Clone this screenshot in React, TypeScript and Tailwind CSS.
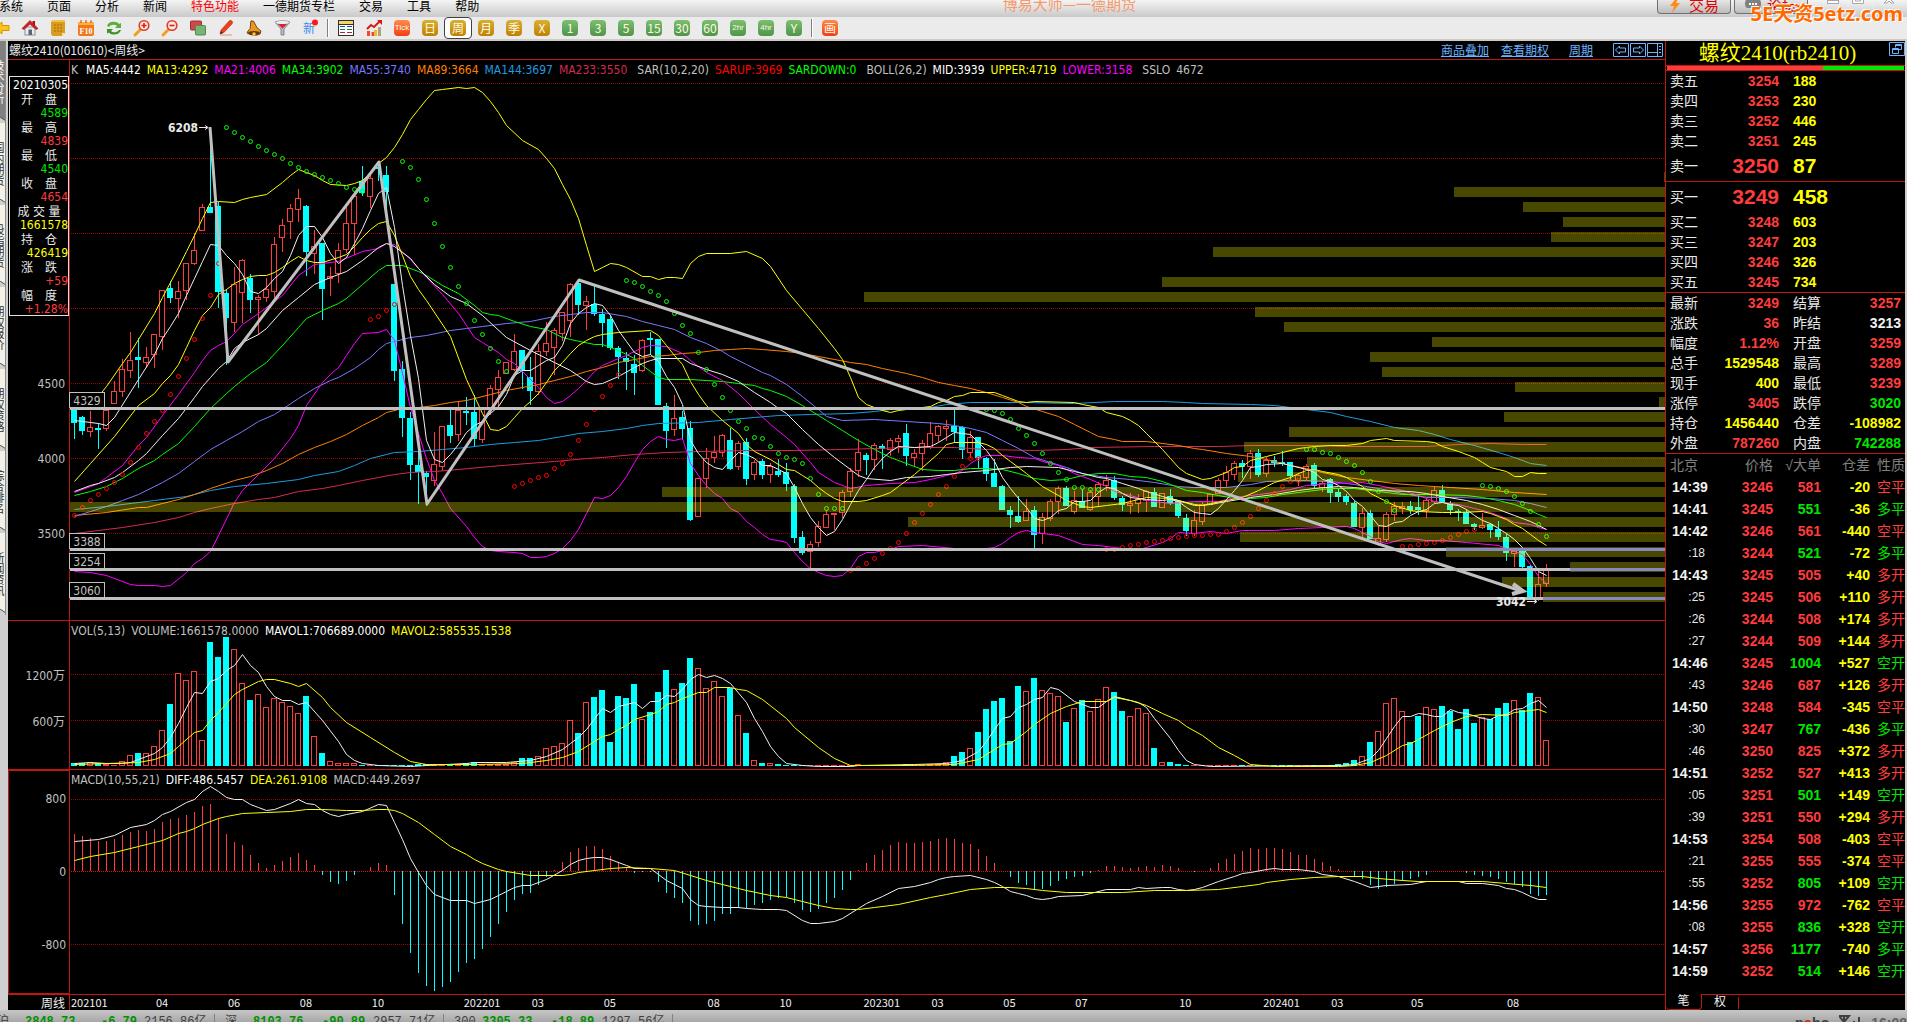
import React from "react";

const UI = "font-['Noto_Sans_CJK_SC',sans-serif]";
const TAHOMA = "font-['DejaVu_Sans_Condensed','Noto_Sans_CJK_SC',sans-serif]";

/* ---------- market data: bar index -> panel y ---------- */

// colour (c = falling, r = rising) + high, body top, body bottom, low
const CANDLES = `c408,409,423,439 c416,417,431,435 r411,427,431,437 c423,428,430,449 r410,410,428,431 r381,391,403,403 r359,369,391,397 r332,360,370,378 c338,357,360,388 r347,357,362,368
r334,334,354,368 r290,290,336,350 c281,288,298,303 r281,291,298,318 r263,263,290,300 r233,250,263,265 r204,207,230,230 c127,207,213,213 c202,206,292,308 c289,293,318,365
r267,284,322,332 r259,260,292,323 c274,278,300,313 r295,297,299,335 r278,289,297,302 r237,244,291,298 r219,225,237,252 r204,208,221,239 r189,198,209,222 c205,206,252,276
r230,246,253,274 c243,243,289,320 r267,276,278,296 r243,250,273,283 r207,223,249,253 r192,196,223,255 c166,181,193,196 r173,178,196,208 c161,167,169,181 c166,175,192,222
c284,284,371,381 c361,369,418,437 c412,418,465,480 c448,465,472,504 c471,473,477,506 r432,464,480,486 r426,426,466,471 c410,425,436,443 r402,410,434,441 c397,411,413,425
c395,412,439,446 r407,408,439,443 r385,388,408,415 r370,377,389,408 r362,362,373,374 r334,351,369,371 c350,350,371,389 c357,377,391,405 r344,351,391,395 r322,343,351,356
r328,330,347,375 r312,312,333,341 r283,284,320,337 c282,283,305,315 r296,301,305,330 c286,304,314,316 c309,314,323,347 c315,319,348,350 c346,348,357,379 c352,358,362,390
c355,364,373,395 r339,340,370,372 c332,338,340,355 c339,339,405,405 c403,406,431,448 r395,418,429,436 c411,417,429,440 c421,428,520,521 r478,478,516,516 r448,458,478,488
r436,452,457,463 r434,435,452,457 c428,440,469,470 r441,443,466,470 c438,442,479,485 r460,462,474,480 c459,461,475,479 r463,466,474,483 c459,471,475,477 c463,472,484,491
c484,486,538,543 c531,537,553,555 r541,544,551,570 r521,526,542,547 r510,514,527,527 r513,513,514,530 r490,492,512,518 r468,471,491,497 r439,452,470,477 c453,455,460,475
r443,445,459,470 c444,446,449,469 r438,440,449,456 r435,438,441,453 c424,433,456,466 r449,453,457,467 r440,443,453,471 r422,433,447,449 r425,426,435,442 r420,426,428,441
c409,426,432,443 c426,427,450,459 r431,437,452,458 c437,437,458,469 c457,458,474,481 c459,473,487,487 c485,486,510,510 c506,510,515,528 c496,516,522,523 r499,511,520,520
c506,510,535,549 r513,517,533,544 r499,501,518,521 r486,488,501,514 c486,488,506,506 r491,500,511,514 c489,501,508,508 r490,492,509,511 r482,484,496,506 r475,480,485,491
c476,480,498,500 c496,498,505,511 r493,503,505,514 r494,499,503,513 r490,491,500,512 c488,492,507,507 r493,493,507,507 c489,496,503,505 c500,501,516,518 c514,518,531,536
r510,520,533,536 r502,504,521,525 r494,494,504,504 r478,480,493,494 r466,472,480,487 r461,463,474,480 c460,463,467,478 r450,453,466,479 c449,453,475,477 r457,460,473,477
c456,460,463,467 c451,462,464,466 c462,462,476,480 r473,475,480,486 r464,466,477,480 c463,465,486,488 r481,483,487,492 c478,479,493,503 c489,492,497,502 c494,496,502,505
c501,503,527,527 r508,513,527,538 c510,513,539,539 r526,538,543,546 r512,514,539,542 r502,506,514,521 r502,506,508,514 c501,506,510,514 c496,507,510,515 r498,500,510,518
r487,490,501,503 c485,490,503,503 c501,503,510,515 c509,511,513,521 c509,512,524,524 c523,524,527,530 r513,525,527,529 c523,524,530,538 c521,529,537,540 c534,537,553,561
r549,551,553,567 c550,550,567,570 c565,566,599,600 r572,584,598,601 r564,570,583,587`
  .split(/\s+/)
  .map((s) => ({ up: s[0] === "r", v: s.slice(1).split(",").map(Number) }));

const VOLUME = [
  3, 3, 4, 3, 2, 1, 5, 11, 13, 13, 20, 36, 62, 93, 86, 95, 26, 124, 109, 129, 117, 83, 66, 72, 59, 68, 64, 60, 53, 70,
  30, 13, 5, 3, 3, 3, 1, 1, 1, 1, 1, 1, 1, 2, 2, 2, 2, 2, 2, 3, 4, 2, 2, 2, 2, 4, 8, 8, 10, 18,
  20, 23, 46, 33, 64, 69, 76, 24, 70, 68, 82, 47, 54, 74, 96, 77, 83, 108, 98, 78, 85, 70, 78, 51, 33, 6, 3, 3, 2, 1,
  1, 1, 1, 1, 1, 1, 1, 1, 2, 1, 1, 1, 1, 1, 2, 1, 1, 2, 2, 4, 10, 14, 18, 34, 57, 65, 68, 25, 80, 75,
  88, 76, 73, 70, 44, 58, 66, 55, 67, 79, 74, 55, 50, 58, 53, 18, 4, 4, 2, 1, 1, 1, 1, 1, 1, 1, 1, 1, 1, 1,
  1, 1, 1, 1, 1, 1, 1, 1, 2, 3, 6, 10, 24, 35, 63, 68, 55, 24, 50, 59, 57, 60, 55, 37, 57, 43, 49, 47, 58, 63,
  66, 56, 73, 69, 26,
];

const MACD = [
  37, 35, 33, 30, 30, 32, 36, 39, 41, 40, 42, 49, 52, 53, 56, 59, 65, 67, 53, 37, 29, 26, 16, 8, 3, 6, 10, 14, 18, 11,
  6, -4, -11, -13, -10, -4, 0, 4, 8, 6, -24, -53, -82, -102, -115, -120, -116, -111, -101, -92, -88, -78, -66, -53, -41, -29, -23, -22, -14, -6,
  1, 9, 19, 23, 25, 25, 22, 15, 9, 4, -2, -1, -1, -11, -22, -27, -32, -50, -54, -53, -50, -43, -43, -37, -37, -34, -32, -29, -27, -26,
  -32, -39, -41, -38, -32, -27, -19, -9, 1, 8, 16, 21, 26, 29, 28, 28, 29, 30, 32, 33, 32, 28, 27, 22, 15, 8, 0, -6, -12, -14,
  -18, -18, -15, -10, -8, -6, -5, -2, 1, 5, 5, 4, 3, 4, 5, 4, 6, 5, 3, 0, -1, 0, 3, 8, 12, 17, 20, 23, 22, 23,
  23, 22, 19, 16, 16, 12, 9, 5, 2, 0, -6, -8, -14, -18, -16, -13, -10, -8, -6, -4, 0, 0, 0, 0, -2, -4, -5, -6, -8, -11,
  -13, -16, -23, -25, -24,
];

const MA233 = "0,533 3,530 6,527 10,522 13,517 15,512 17,508 20,503 23,499 25,497 28,491 31,488 33,485 36,480 38,477 40,474 42,472 45,471 48,469 52,466 55,464 60,461 64,458 66,457 70,454 74,452 78,451 84,450 90,450 96,449 104,447 110,447 114,449 120,450 124,449 127,447 135,446 143,446 147,445 155,445 159,446 165,446 169,446 173,444 177,443 181,444 184,444";
const MA144 = "0,509 4,506 8,502 10,500 14,496 17,490 20,486 24,483 28,479 30,475 33,471 35,465 37,458 39,454 40,452 43,451 46,449 49,447 52,444 55,442 58,440 61,436 63,433 66,431 69,428 71,425 73,423 78,422 82,419 85,417 88,415 92,414 97,413 100,411 103,408 107,407 109,404 112,402 119,402 125,403 130,401 136,401 139,402 141,403 147,404 150,405 152,407 155,410 157,412 159,416 162,421 165,427 168,430 170,434 172,439 175,445 178,452 180,457 182,463 184,465";
const MA89 = "0,515 4,512 8,507 9,507 11,503 13,499 15,494 17,488 20,480 22,476 24,470 26,463 28,454 30,447 32,441 34,434 36,425 38,417 39,412 41,408 43,407 45,405 47,402 49,400 52,394 54,390 56,387 58,384 60,380 62,376 64,371 66,367 68,362 70,359 72,356 74,355 76,353 78,352 80,350 82,349 84,348 86,349 89,351 91,353 93,356 95,359 97,362 99,364 101,368 104,373 106,377 108,382 110,385 112,388 114,392 116,397 118,402 119,406 121,411 123,416 125,424 127,432 128,436 130,439 131,441 134,441 136,443 138,445 140,448 141,449 144,453 147,456 149,459 152,465 154,468 156,472 159,477 162,480 165,483 168,485 172,487 176,489 180,492 184,494";
const MA55 = "0,516 2,511 4,506 6,500 8,494 11,482 13,473 15,461 17,449 19,440 21,431 23,421 25,414 28,398 30,388 32,380 33,377 35,368 37,357 38,349 39,343 40,341 42,337 44,335 47,330 49,328 51,326 54,323 57,321 60,316 62,314 64,312 66,312 69,316 71,321 73,325 75,329 77,337 79,343 81,351 82,356 84,364 86,372 87,375 89,384 91,396 93,409 94,416 96,420 100,419 104,421 108,423 110,425 112,428 114,432 116,440 118,448 120,457 122,462 124,467 126,473 129,477 132,479 135,482 138,486 140,487 144,487 147,484 149,481 152,480 154,480 157,481 160,484 163,488 166,493 169,497 173,497 177,498 180,500 182,503 184,507";
const MA34 = "0,495 2,491 4,486 6,478 8,468 10,460 11,454 13,443 15,426 17,408 19,393 20,386 22,373 24,362 26,345 28,327 29,318 31,310 33,303 34,298 36,284 38,270 39,265 41,265 43,271 44,275 46,285 48,293 50,305 51,312 52,314 53,315 55,321 57,326 59,329 61,337 62,339 65,344 66,344 67,347 68,350 70,358 71,365 72,371 73,377 74,379 77,379 79,380 81,381 83,383 84,384 85,385 86,388 87,390 89,396 91,405 93,415 94,420 96,430 98,440 100,449 102,457 104,463 106,469 108,470 110,470 112,468 114,468 116,469 118,473 120,478 122,480 124,479 126,475 128,473 130,473 132,476 134,477 136,481 137,484 139,490 141,492 143,495 145,498 147,498 149,497 151,494 154,491 157,488 160,488 163,491 166,494 170,494 174,495 176,497 178,500 180,504 182,510 183,514 184,517";
const MA21 = "0,492 2,486 3,483 4,477 6,465 8,445 9,437 11,415 13,394 15,372 16,360 17,350 18,345 19,341 20,333 21,324 23,313 25,301 26,295 28,275 30,264 33,261 36,251 38,248 39,243 40,244 42,259 44,277 46,294 48,313 49,325 50,337 51,342 53,352 54,359 55,363 57,379 58,387 59,397 60,403 61,401 62,395 63,388 64,380 65,371 66,365 68,358 69,355 71,347 72,345 74,346 76,353 77,360 79,372 81,380 83,393 85,409 87,424 89,437 90,444 92,462 93,472 95,482 97,488 99,485 102,483 105,482 107,479 110,473 111,470 112,463 113,458 114,455 116,455 118,457 120,458 121,461 123,465 125,473 127,479 129,486 130,491 132,495 134,500 137,503 140,501 143,501 145,497 148,494 150,492 152,489 154,485 157,483 161,482 163,485 166,490 168,495 170,501 173,504 175,508 177,512 179,518 180,522 182,524 183,527 184,529";
const MID = "0,491 2,485 3,483 5,477 6,472 8,460 9,453 11,435 13,418 15,397 16,386 17,377 18,368 19,361 20,348 21,342 23,334 24,328 26,310 28,297 30,284 32,277 34,271 36,260 38,247 39,243 40,246 41,252 42,258 43,268 45,284 47,296 49,303 51,315 54,337 57,350 60,362 62,370 64,381 65,384 66,383 68,376 70,367 71,363 72,360 73,358 76,358 77,363 79,369 81,374 83,381 85,392 87,402 88,408 89,413 91,429 93,444 95,457 97,469 98,475 99,478 102,480 104,477 107,476 109,474 111,472 114,470 117,467 119,466 123,467 125,471 128,477 129,478 131,483 133,488 134,491 136,496 138,500 140,504 141,505 142,504 144,501 147,497 150,494 153,490 155,488 158,486 160,487 163,490 167,491 169,493 171,496 174,500 176,504 178,509 180,515 182,521 183,525 184,529";
const MA13 = "0,481 2,463 5,436 8,405 10,393 11,383 12,375 13,364 14,347 15,330 16,315 17,307 18,294 19,289 20,283 21,279 22,276 23,275 24,275 25,272 26,267 27,261 28,256 29,260 30,262 31,262 33,257 34,254 35,246 36,237 37,229 38,223 39,221 40,235 41,255 42,276 43,289 44,300 47,336 49,379 50,396 51,413 52,429 53,430 54,426 55,417 56,408 57,401 58,393 59,382 60,370 61,362 62,353 63,345 64,340 65,336 66,334 68,332 72,330 73,335 74,345 75,355 76,364 77,381 78,394 79,405 81,420 83,433 84,444 85,451 86,455 87,459 89,469 90,470 91,475 92,480 93,487 94,493 95,498 96,501 98,501 99,500 101,495 102,492 103,486 105,474 106,467 108,453 109,444 110,442 113,442 114,444 115,448 116,455 117,461 119,473 121,486 123,495 124,500 125,503 126,506 127,507 129,505 131,503 133,499 134,497 137,498 138,500 140,505 141,505 142,503 144,500 146,497 148,490 149,486 150,482 152,477 153,473 154,470 155,469 156,471 158,474 159,477 161,486 162,493 163,497 164,501 165,505 167,510 168,511 171,512 173,512 176,511 177,513 178,516 179,519 180,524 181,528 182,534 183,540 184,545";
const UPPER = "3,396 4,386 6,363 7,352 8,339 10,313 11,297 12,282 13,267 14,251 15,235 16,218 17,202 18,201 20,202 21,199 22,197 24,194 26,182 27,175 28,169 29,172 30,175 31,180 32,184 34,185 35,183 36,180 37,172 38,163 39,157 40,147 41,134 42,119 43,109 44,99 45,90 46,89 48,87 49,88 50,87 51,92 52,101 53,112 54,125 56,140 58,149 59,158 60,168 61,184 62,199 63,218 64,245 65,271 66,267 67,263 68,264 69,267 71,276 72,276 73,279 74,277 75,277 76,278 77,263 78,256 79,253 82,253 84,251 86,258 87,266 89,290 91,309 93,328 95,348 96,359 97,377 98,397 99,404 101,410 102,412 103,410 105,408 107,406 108,402 109,400 110,396 111,395 112,392 115,392 116,395 117,398 118,401 119,402 120,401 125,402 126,404 128,407 129,412 131,416 132,420 133,425 134,433 136,449 137,458 138,467 139,473 141,479 142,478 143,475 144,472 145,467 146,466 147,460 149,456 151,452 153,448 155,446 157,445 159,445 161,443 162,440 164,438 165,440 169,441 170,442 171,446 173,451 175,457 176,462 177,467 178,469 179,471 180,476 181,476 182,472 183,473 184,473";
const LOWER = "0,571 2,572 4,575 7,584 8,585 10,585 11,586 12,585 14,572 15,563 16,558 17,551 18,535 20,502 21,490 23,474 25,458 27,438 28,425 29,405 31,382 32,374 33,367 34,355 35,343 36,333 38,332 39,329 40,340 41,373 42,407 43,433 44,458 45,480 46,493 47,508 49,526 50,537 51,546 52,550 53,551 55,552 56,553 57,557 58,557 59,556 60,553 61,548 62,540 63,529 64,513 65,497 66,498 67,495 68,487 69,476 70,462 71,449 72,441 73,436 74,439 75,440 76,438 77,463 78,475 79,485 80,493 81,498 82,508 83,512 84,521 85,527 86,534 87,539 88,540 89,542 90,552 91,561 92,568 93,572 94,575 95,576 96,575 97,568 98,556 99,552 100,552 101,550 102,549 103,546 106,545 110,548 114,548 115,547 116,543 117,537 118,532 119,530 120,532 123,535 126,544 128,545 131,548 133,549 134,547 136,542 137,538 138,532 140,533 142,531 144,533 146,530 150,530 153,528 156,527 159,526 160,528 162,536 163,541 164,543 166,539 167,538 169,540 171,540 174,542 178,545 180,551 181,554 182,564 183,576 184,583";
const MA5 = "0,420 2,422 3,423 4,425 5,417 8,379 10,354 11,338 12,326 13,313 14,295 15,278 16,261 17,244 18,245 19,255 20,263 21,274 22,291 23,293 24,287 25,278 26,271 27,255 28,235 29,226 30,226 31,237 32,253 33,263 34,257 35,243 36,228 37,210 38,193 39,187 40,227 41,285 42,335 43,378 44,440 45,459 46,462 47,454 48,444 49,432 50,425 51,421 52,413 53,406 54,394 55,375 56,370 57,370 58,365 59,360 60,357 61,345 62,323 63,313 64,307 65,303 66,305 67,315 68,330 69,341 70,352 71,356 72,354 73,361 74,376 75,387 76,404 77,440 78,453 79,462 80,467 81,469 82,460 83,452 84,454 85,458 86,465 87,465 88,469 89,473 90,487 91,503 92,517 93,527 94,535 95,531 96,519 97,504 98,490 99,479 100,467 101,458 102,451 103,446 105,447 107,446 108,442 109,437 110,432 112,434 113,442 114,450 115,461 116,477 117,488 118,498 119,507 120,518 121,520 122,517 123,510 124,508 125,501 126,501 127,500 128,492 129,487 130,488 131,493 132,497 134,499 136,500 137,499 138,501 139,507 140,512 141,513 142,514 143,508 144,499 145,490 146,480 147,467 148,466 149,464 151,463 152,465 154,469 155,472 156,479 157,481 158,485 159,491 160,500 161,506 162,515 163,525 164,526 165,522 166,521 167,515 168,511 169,509 170,503 171,502 172,504 173,505 174,509 175,515 176,520 177,523 178,528 179,533 180,539 181,547 182,558 183,571 184,575";

const VMA5 = "0,763 2,762 4,763 6,763 7,762 8,759 10,753 11,747 12,737 13,723 14,707 15,692 16,693 17,681 18,678 19,670 20,665 21,654 22,665 23,672 24,686 25,696 26,700 27,700 28,704 29,702 31,720 33,741 34,754 35,760 36,763 38,765 42,766 44,765 49,763 50,762 54,762 57,760 59,756 61,749 62,743 63,737 64,729 66,708 67,712 68,706 70,702 71,708 72,701 73,701 74,695 75,696 76,689 77,679 78,674 79,677 80,675 81,678 82,683 84,702 85,718 86,731 87,746 88,756 89,763 91,765 93,766 97,766 98,765 105,764 109,763 111,760 113,751 114,741 115,729 116,718 117,716 118,707 119,704 120,699 121,697 122,687 123,689 125,701 127,707 128,707 129,701 130,696 132,700 133,702 134,707 135,718 137,738 138,750 139,760 140,764 142,766 158,765 160,764 161,761 162,758 163,750 164,738 165,726 166,716 167,716 168,713 169,714 170,716 171,716 172,709 173,712 174,713 176,718 177,719 178,715 179,714 180,709 181,708 182,703 183,700 184,707";
const VMA13 = "0,764 8,762 10,759 12,753 13,746 15,732 16,730 17,720 18,712 20,694 21,689 23,681 24,679 25,679 27,683 28,686 29,683 31,697 32,707 34,722 37,737 40,752 42,761 44,764 50,764 56,763 59,760 61,757 63,751 65,741 66,736 67,734 68,729 69,725 70,719 72,714 73,711 74,704 75,702 76,698 78,692 79,692 80,687 82,687 83,689 84,690 86,699 89,718 90,727 93,747 95,758 97,765 104,765 110,764 113,759 115,749 116,744 117,743 119,731 120,724 122,713 124,706 126,701 129,701 130,697 132,700 134,705 136,713 138,720 139,726 141,735 143,747 145,755 147,764 150,766 158,766 160,765 162,762 164,755 166,745 167,743 168,739 170,730 172,722 174,716 176,714 179,715 180,712 181,711 183,709 184,712";
const DIFF = "0,841 3,839 5,835 7,827 9,824 10,820 11,814 12,811 14,802 15,799 16,791 17,786 18,791 19,797 20,799 21,799 22,804 23,807 24,810 25,809 27,803 28,799 29,803 30,804 31,810 32,814 33,816 34,814 36,811 38,804 39,805 40,822 41,839 42,858 43,872 44,885 45,894 47,900 49,900 50,903 52,899 54,891 55,887 56,885 57,885 59,879 61,870 62,864 63,860 64,858 65,857 66,857 67,859 69,865 70,868 72,868 73,874 74,880 76,888 77,899 78,905 79,906 81,907 83,907 84,908 86,909 88,909 89,910 91,920 92,923 93,923 95,921 96,918 98,908 99,903 101,896 103,888 105,886 107,882 108,879 109,877 110,876 112,875 114,879 115,882 116,886 117,891 118,893 119,895 120,898 121,899 122,898 123,896 126,895 127,893 129,889 132,889 133,887 134,888 136,887 137,887 138,889 139,890 140,889 141,887 143,881 145,876 146,873 147,872 149,869 150,868 151,869 153,869 155,871 156,874 158,876 160,881 161,884 162,887 164,885 167,884 169,881 173,881 174,883 176,883 178,885 179,888 180,889 181,892 182,896 183,899 184,899";
const DEA = "0,860 2,856 5,852 8,846 11,840 13,833 14,831 15,828 16,824 18,818 19,816 21,813 24,812 27,811 29,809 31,809 34,810 36,810 38,809 39,809 40,810 41,813 43,822 45,834 47,846 49,854 50,859 51,863 53,869 54,871 57,875 61,875 62,874 63,872 65,870 67,868 69,867 72,868 75,870 77,875 79,880 81,884 84,890 87,895 89,897 91,901 93,905 95,908 97,909 98,909 100,907 103,904 107,897 109,894 112,889 115,887 117,887 119,888 121,890 124,892 131,892 135,890 139,890 143,889 146,886 148,884 149,882 152,879 155,877 158,876 161,876 163,878 166,880 168,881 176,881 179,883 182,885 184,887";

// parabolic SAR runs: first index, then consecutive y values
const SAR_DOWN: [number, number[]][] = [
  [19, [127, 132, 137, 141, 146, 150, 154, 158, 163, 167, 171, 174, 177, 180, 183, 187, 189, 191]],
  [41, [161, 167, 179, 199, 223, 246, 267, 286, 303, 320, 334, 348, 361, 371]],
  [69, [280, 282, 286, 291, 295, 301, 313, 325, 333, 352, 369, 384, 397, 410, 421, 428, 437, 438, 446, 453, 457, 459, 463, 478, 494, 508, 508, 508]],
  [114, [409, 410, 413, 419, 428, 435, 443, 453, 463, 472, 479, 487, 487, 489, 489]],
  [154, [449, 449, 452, 453, 457, 461, 465, 472, 481, 491, 501, 510]],
  [176, [485, 486, 488, 491, 496, 503, 511, 524, 536]],
];
const SAR_UP: [number, number[]][] = [
  [0, [515, 507, 500, 494, 488, 482, 474, 462, 447, 433, 421, 410, 394, 376, 358, 339, 318, 295, 263]],
  [37, [319, 316, 310, 304]],
  [55, [486, 483, 480, 477, 475, 468, 463, 454, 440, 424, 409, 396, 385, 374]],
  [97, [570, 568, 563, 558, 553, 548, 542, 533, 522, 513, 504, 494, 486, 476, 466, 458, 458]],
  [129, [549, 549, 547, 545, 544, 542, 541, 540, 538, 537, 536, 535, 535, 534, 534, 531, 527, 522, 516, 508, 500, 493, 486, 481, 480]],
  [166, [546, 546, 544, 543, 542, 540, 537, 534, 531, 529]],
];

// volume-at-price profile: left edge, top
const PROFILE: [number, number][] = [
  [1664, 172], [1454, 187], [1523, 202], [1563, 217], [1551, 232], [1213, 247], [1162, 277], [864, 292], [1255, 307],
  [1284, 322], [1432, 337], [1370, 352], [1382, 367], [1515, 382], [1659, 397], [1504, 412], [1289, 427], [1244, 442],
  [1307, 457], [1238, 472], [662, 487], [70, 502], [908, 517], [1240, 532], [1446, 547], [1570, 562], [1502, 577], [1543, 592],
];

const LEVELS = [
  { label: "4329", y: 407, tint: 0 },
  { label: "3388", y: 548, tint: 1446 },
  { label: "3254", y: 568, tint: 1570 },
  { label: "3060", y: 597, tint: 1543 },
];

const xOf = (i: number) => 74 + 8 * i;
const RED = "#ff3c3c";
const CYAN = "#00ffff";

function Line({ data, color }: { data: string; color: string }) {
  const points = data
    .split(" ")
    .map((p) => {
      const [i, y] = p.split(",").map(Number);
      return `${xOf(i) + 0.5},${y + 0.5}`;
    })
    .join(" ");
  return <polyline points={points} fill="none" stroke={color} strokeWidth="1" />;
}

function Grid({ ys, color = "#9a0000" }: { ys: number[]; color?: string }) {
  return (
    <>
      {ys.map((y) => (
        <line key={y} x1="71" x2="1665" y1={y + 0.5} y2={y + 0.5} stroke={color} strokeDasharray="1 1" shapeRendering="crispEdges" />
      ))}
    </>
  );
}

function PriceChart() {
  return (
    <svg className="absolute inset-0 h-full w-full" viewBox="70 60 1595 560" preserveAspectRatio="none" role="img" aria-label="螺纹2410 周K线">
      <Grid ys={[83, 158, 233, 308, 383, 458, 533]} />
      <g shapeRendering="crispEdges">
        {CANDLES.map(({ up, v: [h, t, b, l] }, i) => {
          const x = xOf(i);
          const hgt = Math.max(b - t, 1);
          return (
            <g key={i}>
              <rect x={x} y={h} width="1" height={Math.max(l - h, 1)} fill={up ? RED : CYAN} />
              {up ? (
                <rect x={x - 2.5} y={t + 0.5} width="5" height={hgt} fill="#000" stroke={RED} />
              ) : (
                <rect x={x - 3} y={t} width="6" height={hgt} fill={CYAN} />
              )}
            </g>
          );
        })}
      </g>
      <Line data={MA233} color="#d42a50" />
      <Line data={MA144} color="#1e9be0" />
      <Line data={MA89} color="#ff8000" />
      <Line data={MA55} color="#7878ff" />
      <Line data={MA34} color="#00ff00" />
      <Line data={MA21} color="#ff00ff" />
      <Line data={LOWER} color="#ff00ff" />
      <Line data={MID} color="#f0f0f0" />
      <Line data={UPPER} color="#ffff00" />
      <Line data={MA13} color="#ffff00" />
      <Line data={MA5} color="#f0f0f0" />
      {[...SAR_DOWN.map((s) => [...s, "#00ff00"]), ...SAR_UP.map((s) => [...s, "#ff0000"])].map(([start, ys, color], k) => (
        <g key={k} fill="none" stroke={color as string}>
          {(ys as number[]).map((y, n) => (
            <circle key={n} cx={xOf((start as number) + n) + 0.5} cy={y + 0.5} r="2" />
          ))}
        </g>
      ))}
      <g fill="#fffa00" fillOpacity="0.285" shapeRendering="crispEdges">
        {PROFILE.map(([x, y]) => (
          <rect key={y} x={x} y={y} width={1665 - x} height="10" />
        ))}
      </g>
      <g shapeRendering="crispEdges">
        {LEVELS.map(({ y, tint }) => (
          <g key={y}>
            <rect x="70" y={y} width="1595" height="3" fill="#c0c0c0" />
            {tint > 0 && <rect x={tint} y={y} width={1665 - tint} height="3" fill="#8888c0" />}
          </g>
        ))}
      </g>
      <polyline points="210,127 228,362 379,162 427,504 579,280 1521,591" fill="none" stroke="#c0c0c0" strokeWidth="3" strokeLinejoin="round" />
      <path d="M1513 584L1523 591L1512 594" fill="none" stroke="#c0c0c0" strokeWidth="4" />
      <path d="M199 127.5h8M205 125.5l3 2l-3 2M1527 601.5h9M1534 599.5l3 2l-3 2" fill="none" stroke="#e8e8e8" />
    </svg>
  );
}

function VolumeChart() {
  return (
    <svg className="absolute inset-0 h-full w-full" viewBox="70 621 1595 148" preserveAspectRatio="none" role="img" aria-label="成交量">
      <Grid ys={[674, 720]} />
      <g shapeRendering="crispEdges">
        {VOLUME.map((v, i) => {
          const x = xOf(i);
          return CANDLES[i].up && v > 1 ? (
            <rect key={i} x={x - 2.5} y={766 - v + 0.5} width="5" height={v - 1} fill="#000" stroke={RED} />
          ) : (
            <rect key={i} x={x - 3} y={766 - v} width="6" height={v} fill={CANDLES[i].up ? RED : CYAN} />
          );
        })}
      </g>
      <Line data={VMA5} color="#f0f0f0" />
      <Line data={VMA13} color="#ffff00" />
    </svg>
  );
}

function MacdChart() {
  return (
    <svg className="absolute inset-0 h-full w-full" viewBox="70 770 1595 224" preserveAspectRatio="none" role="img" aria-label="MACD">
      <Grid ys={[799, 944]} />
      <Grid ys={[871]} color="#e01010" />
      <g shapeRendering="crispEdges">
        {MACD.map((v, i) =>
          v === 0 ? null : (
            <rect key={i} x={xOf(i)} y={v > 0 ? 871 - v : 871} width="1" height={Math.abs(v)} fill={v > 0 ? RED : CYAN} />
          )
        )}
      </g>
      <Line data={DIFF} color="#f0f0f0" />
      <Line data={DEA} color="#ffff00" />
    </svg>
  );
}

/* ---------- toolbar ---------- */

function Icon({ children }: { children: React.ReactNode }) {
  return (
    <svg className="h-4 w-4 overflow-visible" viewBox="0 0 16 16" aria-hidden="true">
      {children}
    </svg>
  );
}

const ICONS: { name: string; art: React.ReactNode }[] = [
  { name: "后退", art: <path d="M1 8l7-6v3.500h7v5h-7v3.500z" fill="#ffc21c" stroke="#d89400" /> },
  {
    name: "首页",
    art: (
      <>
        <rect x="3" y="7" width="10" height="8" fill="#e8ecf0" stroke="#8a8f96" />
        <rect x="10.500" y="1" width="2.500" height="5" fill="#a01818" />
        <path d="M0 8.500L8 0.500l8 8l-2 1L8 4L2 9.500z" fill="#d81e1e" stroke="#8c1010" strokeWidth=".6" />
        <rect x="6.500" y="9.500" width="3.500" height="5.500" fill="#5a6472" />
      </>
    ),
  },
  {
    name: "便签",
    art: (
      <>
        <path d="M3 0h12v13l-3 3H2.500L1 14V2z" fill="#d99c1e" />
        <path d="M3 0h12v2H2z" fill="#f0c050" />
        <path d="M4 5h9M4 8h9M4 11h8" stroke="#a86c08" strokeDasharray="2 1" />
        <path d="M12 16v-3h3z" fill="#fbe6a8" />
      </>
    ),
  },
  {
    name: "F10",
    art: (
      <>
        <rect x="0" y="2" width="16" height="14" rx="2" fill="#f07818" />
        <path d="M0 5V4q0-2 2-2h12q2 0 2 2v1z" fill="#ffb040" />
        <path d="M3 3V0M8 3V0M13 3V0" stroke="#b04808" />
        <text x="8" y="13.500" fontSize="8" fontWeight="700" textAnchor="middle" fill="#fff" fontFamily="Liberation Serif">F10</text>
      </>
    ),
  },
  {
    name: "刷新",
    art: (
      <>
        <path d="M1 6q2-5 8-4q3 0 4 2l2-1v5H9l2-2q-2-2-5-1q-2 0-3 2z" fill="#5cae3c" />
        <path d="M15 10q-2 5-8 4.500q-3 0-4-2l-2 1V9h6l-2 2q2 2 5 1q2-.5 3-2z" fill="#3f9428" />
      </>
    ),
  },
  {
    name: "放大",
    art: (
      <>
        <path d="M1 15l5-5" stroke="#f0a020" strokeWidth="3" strokeLinecap="round" />
        <circle cx="10" cy="5.500" r="4.800" fill="#ffe8e4" stroke="#e03a28" strokeWidth="1.600" />
        <path d="M10 3v5M7.500 5.500h5" stroke="#d82010" strokeWidth="1.600" />
      </>
    ),
  },
  {
    name: "缩小",
    art: (
      <>
        <path d="M1 15l5-5" stroke="#f0a020" strokeWidth="3" strokeLinecap="round" />
        <circle cx="10" cy="5.500" r="4.800" fill="#ffe8e4" stroke="#e03a28" strokeWidth="1.600" />
        <path d="M7.500 5.500h5" stroke="#d82010" strokeWidth="1.600" />
      </>
    ),
  },
  {
    name: "叠加",
    art: (
      <>
        <rect x="0.500" y="1" width="11" height="9" rx="1" fill="#d04848" stroke="#a03030" />
        <rect x="5.500" y="5.500" width="10" height="9.500" rx="1" fill="#78b478" stroke="#4c8c4c" />
      </>
    ),
  },
  {
    name: "画线",
    art: (
      <>
        <path d="M2 15h12" stroke="#f09080" />
        <path d="M2 14l1-4l8-9q1.500-1.500 3 0t0 3l-8 8.500z" fill="#e84020" stroke="#b02810" strokeWidth=".5" />
        <path d="M2 14l1-3l2 2z" fill="#402010" />
      </>
    ),
  },
  {
    name: "预警",
    art: (
      <>
        <path d="M5 1q3-1 4 3q1 4 6 7l-1 3q-6 3-13-1l1-2q3-2 2.500-6q0-3 .5-4z" fill="#e89a20" stroke="#7a4408" />
        <ellipse cx="8" cy="13" rx="6" ry="2" fill="#6a3608" />
        <circle cx="8" cy="14" r="1.700" fill="#f8c850" />
      </>
    ),
  },
  {
    name: "筛选",
    art: (
      <>
        <path d="M1 2l6 7v6h3V9l6-7z" fill="#b8bcc4" stroke="#70747c" strokeWidth=".8" />
        <ellipse cx="8.500" cy="2.500" rx="7" ry="2" fill="#f0f0f2" stroke="#888" strokeWidth=".7" />
        <path d="M4 4h9l-4.500 4.500z" fill="#e02030" />
      </>
    ),
  },
  {
    name: "新功能",
    art: (
      <>
        <text x="7" y="13" fontSize="12" textAnchor="middle" fill="#3c8ce8" fontFamily="Noto Sans CJK SC">新</text>
        <circle cx="13" cy="2.500" r="3" fill="#ff1818" />
      </>
    ),
  },
];

const ICONS2: { name: string; art: React.ReactNode }[] = [
  {
    name: "报价表",
    art: (
      <>
        <rect x="0.500" y="0.500" width="15" height="15" fill="#fff" stroke="#303030" />
        <rect x="1" y="1" width="14" height="3" fill="#f0d860" />
        <path d="M0 4.500h16" stroke="#303030" />
        <path d="M2 6.500h5M9 6.500h5" stroke="#2040c0" />
        <path d="M2 9.500h5M9 9.500h5" stroke="#188030" />
        <path d="M2 12.500h5M9 12.500h5" stroke="#c02020" />
      </>
    ),
  },
  {
    name: "走势图",
    art: (
      <>
        <path d="M1 11h3v5H1zM5.500 12h3v4h-3z" fill="#f04830" />
        <path d="M8 10h3v6H8z" fill="#e8c020" />
        <path d="M12 7h3v9h-3z" fill="#b0a080" />
        <path d="M1 9l4-4l3 2l6-6" fill="none" stroke="#d81818" strokeWidth="2" />
        <path d="M11 0h5v5z" fill="#d81818" />
      </>
    ),
  },
];

const TONES = {
  red: "from-[#ff8a4a] to-[#f03c10]",
  gold: "from-[#d8b030] to-[#c08000]",
  green: "from-[#7cc070] to-[#4f9448]",
};

const PERIODS: { t: string; tone: keyof typeof TONES; on?: boolean }[] = [
  { t: "Tick", tone: "red" },
  { t: "日", tone: "gold" },
  { t: "周", tone: "gold", on: true },
  { t: "月", tone: "gold" },
  { t: "季", tone: "gold" },
  { t: "X", tone: "gold" },
  { t: "1", tone: "green" },
  { t: "3", tone: "green" },
  { t: "5", tone: "green" },
  { t: "15", tone: "green" },
  { t: "30", tone: "green" },
  { t: "60", tone: "green" },
  { t: "2hr", tone: "green" },
  { t: "4hr", tone: "green" },
  { t: "Y", tone: "green" },
];

function PeriodButton({ t, tone, on }: { t: string; tone: keyof typeof TONES; on?: boolean }) {
  return (
    <button
      type="button"
      aria-pressed={!!on}
      className={`flex h-[22px] w-7 shrink-0 items-center justify-center ${on ? "rounded border border-[#404040] bg-white" : ""}`}
    >
      <span
        className={`flex h-4 w-4 items-center justify-center rounded-sm bg-linear-to-b leading-4 text-[#fffbe0] ${TONES[tone]} ${
          t.length > 2 ? "font-['Liberation_Sans_Narrow','Liberation_Sans',sans-serif] text-[8px]" : "text-xs"
        }`}
      >
        {t}
      </span>
    </button>
  );
}

function Toolbar() {
  const sep = <span className="mx-[3px] h-[18px] w-0.5 shrink-0 border-l border-[#808080] bg-white" />;
  return (
    <div className="flex h-6 shrink-0 items-center border-b-2 border-[#cfcbc4] bg-[#ebebeb]">
      <div className="-ml-3 flex items-center">
        {ICONS.map((i) => (
          <button key={i.name} type="button" aria-label={i.name} className="flex h-[22px] w-7 shrink-0 items-center justify-center">
            <Icon>{i.art}</Icon>
          </button>
        ))}
        {sep}
        {ICONS2.map((i) => (
          <button key={i.name} type="button" aria-label={i.name} className="flex h-[22px] w-7 shrink-0 items-center justify-center">
            <Icon>{i.art}</Icon>
          </button>
        ))}
        {PERIODS.map((p) => (
          <PeriodButton key={p.t} {...p} />
        ))}
        {sep}
        <PeriodButton t="画" tone="red" />
      </div>
    </div>
  );
}

const MENUS = ["系统", "页面", "分析", "新闻", "特色功能", "一德期货专栏", "交易", "工具", "帮助"];

function MenuBar() {
  return (
    <header className="relative flex h-[17px] shrink-0 items-start justify-between bg-linear-to-b from-[#f4f4f4] to-[#c9c9c9]">
      <nav className="-ml-px flex gap-6 text-xs leading-3 text-black">
        {MENUS.map((m) => (
          <button key={m} type="button" className={`whitespace-nowrap ${m === "特色功能" ? "text-[#ff0000]" : ""}`}>
            {m}
          </button>
        ))}
      </nav>
      <h1 className="absolute left-[53%] top-0 -ml-2 -mt-1 text-[15px] font-normal leading-4 text-[#f49a6c]">博易大师—一德期货</h1>
      <div className="flex gap-[3px]">
        <button type="button" className="flex h-3.5 w-[74px] items-center justify-center gap-2 overflow-hidden rounded-b border border-t-0 border-[#707070] bg-linear-to-b from-[#e6e6e6] to-[#bcbcbc] text-[15px] leading-3 text-[#e00000]">
          <svg className="-mt-1 h-4 w-3" viewBox="0 0 12 16" aria-hidden="true">
            <path d="M8 0L1 9h4l-2 7l8-10H7l3-6z" fill="#ff8c1a" />
          </svg>
          <span className="-mt-1">交易</span>
        </button>
        <button type="button" className="flex h-3.5 w-[74px] items-center justify-center gap-1.5 overflow-hidden rounded-b border border-t-0 border-[#707070] bg-linear-to-b from-[#e6e6e6] to-[#bcbcbc] text-[15px] leading-3 text-[#e00000]">
          <svg className="-mt-1 h-3 w-4" viewBox="0 0 16 12" aria-hidden="true">
            <path d="M3 0h10q3 0 3 4.500T13 9h-3l-2 3V9H3Q0 9 0 4.500T3 0z" fill="#808080" />
            <path d="M4 5h2M7 5h2M10 5h2" stroke="#fff" strokeWidth="2" />
          </svg>
          <span className="-mt-1">论坛</span>
        </button>
        <svg className="ml-3 h-4 w-[84px]" viewBox="0 0 84 16" fill="none" stroke="#a8a8a8" aria-hidden="true">
          <path d="M0 0v7M25 0v7M50 0v7" stroke="#f0f0f0" />
          <rect x="4.500" y="0.500" width="11" height="3" fill="#fff" />
          <path d="M29.500 -1v4.500h11V-1M32.500 -1v2h5v-2" fill="#fff" />
          <path d="M61 3l5-5l5 5h-3l-2-2l-2 2z" fill="#fff" />
        </svg>
      </div>
    </header>
  );
}

/* ---------- left strip ---------- */

const SIDE_TABS = ["技术分析", "国内期货", "股指期货", "期权报价", "期权策略", "综合排名", "新闻资讯"];

function SideTabs() {
  return (
    <aside className="flex w-2 shrink-0 flex-col overflow-hidden bg-[#cfcfcf]">
      {SIDE_TABS.map((t, i) => (
        <button
          key={t}
          type="button"
          className={`relative flex h-[82px] w-1.5 shrink-0 items-center justify-end overflow-hidden border-r border-[#8c8c84] text-[11px] leading-3 ${
            i === 0 ? "bg-[#808080] text-white" : "bg-[#f4f2e8] text-[#303030]"
          }`}
        >
          <span className="[writing-mode:vertical-rl]">{t}</span>
          <svg className="absolute bottom-0 left-0 h-1.5 w-1.5" viewBox="0 0 6 6" aria-hidden="true">
            <path d="M0 0L6 4V6H0z" fill="#cfcfcf" />
            <path d="M0 0L6 4" stroke="#505050" />
          </svg>
        </button>
      ))}
    </aside>
  );
}

/* ---------- chart column ---------- */

const CURSOR_INFO: [string, string, string][] = [
  ["开　盘", "4589", "text-[#00e600]"],
  ["最　高", "4839", "text-[#ff3c3c]"],
  ["最　低", "4540", "text-[#00e600]"],
  ["收　盘", "4654", "text-[#ff3c3c]"],
  ["成 交 量", "1661578", "text-[#ffff00]"],
  ["持　仓", "426419", "text-[#ffff00]"],
  ["涨　跌", "+59", "text-[#ff3c3c]"],
  ["幅　度", "+1.28%", "text-[#ff3c3c]"],
];

const LEGEND: [string, string][] = [
  ["K", "text-[#c0c0c0] mr-0.5"],
  ["MA5:4442", "text-white"],
  ["MA13:4292", "text-[#ffff00]"],
  ["MA21:4006", "text-[#ff00ff]"],
  ["MA34:3902", "text-[#00ff00]"],
  ["MA55:3740", "text-[#7878ff]"],
  ["MA89:3664", "text-[#ff8000]"],
  ["MA144:3697", "text-[#1e9be0]"],
  ["MA233:3550", "text-[#d42a50] mr-1"],
  ["SAR(10,2,20)", "text-[#c0c0c0]"],
  ["SARUP:3969", "text-[#ff0000]"],
  ["SARDOWN:0", "text-[#00ff00] mr-1"],
  ["BOLL(26,2)", "text-[#c0c0c0]"],
  ["MID:3939", "text-white"],
  ["UPPER:4719", "text-[#ffff00]"],
  ["LOWER:3158", "text-[#ff00ff] mr-1"],
  ["SSLO", "text-[#c0c0c0]"],
  ["4672", "text-[#c0c0c0]"],
];

function Legend({ items }: { items: [string, string][] }) {
  return (
    <div className="relative flex gap-1.5 whitespace-nowrap px-px pt-0.5 text-xs leading-4">
      {items.map(([t, c]) => (
        <span key={t} className={c}>
          {t}
        </span>
      ))}
    </div>
  );
}

const MONTHS: [string, number][] = [
  ["202101", 71], ["04", 156], ["06", 228], ["08", 300], ["10", 372], ["202201", 464], ["03", 532], ["05", 604], ["08", 708],
  ["10", 780], ["202301", 864], ["03", 932], ["05", 1004], ["07", 1076], ["10", 1180], ["202401", 1264], ["03", 1332],
  ["05", 1412], ["08", 1508],
];

const pct = (v: number, of: number) => `${(v / of) * 100}%`;

function ChartColumn() {
  return (
    <main className="flex min-w-0 flex-1 flex-col bg-black">
      <div className="flex h-[19px] shrink-0 items-center justify-between border-b border-[#c01810] text-xs leading-4">
        <span className="pl-px text-[#e8e8e8]">螺纹2410(010610)&lt;周线&gt;</span>
        <div className="flex items-center text-[#6cb4ff]">
          <a href="#overlay" className="mr-3 underline">商品叠加</a>
          <a href="#options" className="mr-5 underline">查看期权</a>
          <a href="#period" className="mr-5 underline">周期</a>
          <svg className="h-3.5 w-[52px]" viewBox="0 0 52 14" fill="none" stroke="#6cb4ff" aria-hidden="true">
            <path d="M.5.5h15v13H.5zM17.500.5h15v13h-15zM34.500.5h15v13h-15z" />
            <path d="M2.500 7l4-4v2h6v4h-6v2zM30.500 7l-4-4v2h-6v4h6v2zM34.500 9.500h10M44.500 .5v13M46 3.500h2M46 6.500h2M46 9.500h2" />
          </svg>
        </div>
      </div>

      <div className={`grid min-h-0 flex-1 grid-rows-[561fr_149fr_225fr] ${TAHOMA}`}>
        <div className="flex min-h-0 border-b border-[#c01810]">
          <div className="flex w-[62px] shrink-0 flex-col border-r border-[#c01810] pl-px pt-4 text-right">
            <dl className="flex h-[240px] flex-col border border-[#e0e0e0] text-xs">
              <div className="h-4 text-right leading-4 text-white">20210305</div>
              {CURSOR_INFO.map(([k, v, c]) => (
                <div key={k} className="h-7">
                  <dt className="h-3.5 whitespace-nowrap text-center leading-[14px] text-[#e8e8e8]">{k}</dt>
                  <dd className={`h-3.5 leading-3 ${c}`}>{v}</dd>
                </div>
              ))}
            </dl>
            <div className="flex grow flex-col pr-1 pt-[31px] text-xs leading-[75px] text-[#c0c0c0]">
              <span>4500</span>
              <span>4000</span>
              <span>3500</span>
            </div>
          </div>
          <div className="relative min-w-0 flex-1">
            <PriceChart />
            <Legend items={LEGEND} />
            {LEVELS.map(({ label, y }) => (
              <span
                key={label}
                className="absolute -left-px h-4 w-9 -translate-y-full border border-[#c0c0c0] bg-black text-center text-xs leading-4 text-[#c0c0c0]"
                style={{ top: pct(y + 1 - 60, 560) }}
              >
                {label}
              </span>
            ))}
            <span className="absolute text-xs font-bold leading-4 text-[#e8e8e8]" style={{ left: pct(98, 1595), top: pct(60, 560) }}>
              6208
            </span>
            <span className="absolute text-xs font-bold leading-4 text-[#e8e8e8]" style={{ left: pct(1426, 1595), top: pct(534, 560) }}>
              3042
            </span>
          </div>
        </div>

        <div className="flex min-h-0 border-b border-[#c01810]">
          <div className="flex w-[62px] shrink-0 flex-col border-r border-[#c01810] pr-1 pt-8 text-right text-xs leading-[46px] text-[#c0c0c0]">
            <span>1200万</span>
            <span>600万</span>
          </div>
          <div className="relative min-w-0 flex-1">
            <VolumeChart />
            <Legend
              items={[
                ["VOL(5,13)", "text-[#c0c0c0]"],
                ["VOLUME:1661578.0000", "text-[#c0c0c0]"],
                ["MAVOL1:706689.0000", "text-white"],
                ["MAVOL2:585535.1538", "text-[#ffff00]"],
              ]}
            />
          </div>
        </div>

        <div className="flex min-h-0 border-b border-[#c01810]">
          <div className="flex w-[62px] shrink-0 flex-col border border-[#c01810] pr-[3px] text-right text-xs leading-[73px] text-[#c0c0c0]">
            <div className="-mt-2 flex flex-col">
              <span>800</span>
              <span>0</span>
              <span>-800</span>
            </div>
          </div>
          <div className="relative min-w-0 flex-1">
            <MacdChart />
            <Legend
              items={[
                ["MACD(10,55,21)", "text-[#c0c0c0]"],
                ["DIFF:486.5457", "text-white"],
                ["DEA:261.9108", "text-[#ffff00]"],
                ["MACD:449.2697", "text-[#c0c0c0]"],
              ]}
            />
          </div>
        </div>
      </div>

      <div className="flex h-[15px] shrink-0 text-[#f0f0f0]">
        <span className="w-[62px] shrink-0 border-r border-[#c01810] pr-1 text-right text-xs leading-[15px]">周线</span>
        <div className="flex min-w-0 flex-1 pl-px text-[11px] leading-[15px]">
          {MONTHS.map(([m, x], i) => (
            <span key={x} className="shrink-0" style={{ width: pct((MONTHS[i + 1]?.[1] ?? 1660) - x, 1595) }}>
              {m}
            </span>
          ))}
        </div>
      </div>
    </main>
  );
}

/* ---------- quote panel ---------- */

const C: Record<string, string> = {
  r: "text-[#ff3c3c]",
  g: "text-[#00e600]",
  y: "text-[#ffff00]",
  w: "text-[#f0f0f0]",
};

const ASKS = [["卖五", "3254", "188"], ["卖四", "3253", "230"], ["卖三", "3252", "446"], ["卖二", "3251", "245"], ["卖一", "3250", "87"]];
const BIDS = [["买一", "3249", "458"], ["买二", "3248", "603"], ["买三", "3247", "203"], ["买四", "3246", "326"], ["买五", "3245", "734"]];

const STATS: string[][] = [
  ["最新", "3249", "r", "结算", "3257", "r"],
  ["涨跌", "36", "r", "昨结", "3213", "w"],
  ["幅度", "1.12%", "r", "开盘", "3259", "r"],
  ["总手", "1529548", "y", "最高", "3289", "r"],
  ["现手", "400", "y", "最低", "3239", "r"],
  ["涨停", "3405", "r", "跌停", "3020", "g"],
  ["持仓", "1456440", "y", "仓差", "-108982", "y"],
  ["外盘", "787260", "r", "内盘", "742288", "g"],
];

const TICKS = `14:39 3246 581 r -20 空平|14:41 3245 551 g -36 多平|14:42 3246 561 r -440 空平|:18 3244 521 g -72 多平|14:43 3245 505 r +40 多开|:25 3245 506 r +110 多开|:26 3244 508 r +174 多开|:27 3244 509 r +144 多开|14:46 3245 1004 g +527 空开|:43 3246 687 r +126 多开|14:50 3248 584 r -345 空平|:30 3247 767 g -436 多平|:46 3250 825 r +372 多开|14:51 3252 527 r +413 多开|:05 3251 501 g +149 空开|:39 3251 550 r +294 多开|14:53 3254 508 r -403 空平|:21 3255 555 r -374 空平|:55 3252 805 g +109 空开|14:56 3255 972 r -762 空平|:08 3255 836 g +328 空开|14:57 3256 1177 g -740 多平|14:59 3252 514 g +146 空开`
  .split("|")
  .map((s) => s.split(" "));

function Depth({ rows, big }: { rows: string[][]; big: number }) {
  return (
    <div className="border-b border-[#c01810]">
      <table className="w-full table-fixed border-collapse text-sm">
        <colgroup>
          <col className="w-[45px]" />
          <col className="w-[68px]" />
          <col />
        </colgroup>
        <tbody>
          {rows.map(([k, p, v], i) => (
            <tr key={k} className={i === big ? "h-[30px]" : "h-5"}>
              <th scope="row" className="p-0 pl-1 text-left font-normal leading-5 text-[#e8e8e8]">{k}</th>
              <td className={`p-0 text-right font-bold leading-5 text-[#ff3c3c] ${i === big ? "text-[21px]" : ""}`}>{p}</td>
              <td className={`p-0 pl-3.5 font-bold leading-5 text-[#ffff00] ${i === big ? "text-[21px]" : ""}`}>{v}</td>
            </tr>
          ))}
        </tbody>
      </table>
    </div>
  );
}

function QuotePanel() {
  return (
    <section className="flex w-[242px] shrink-0 flex-col border-l border-r-2 border-l-[#c01810] border-r-[#d0ccc8] bg-black font-['Liberation_Sans','Noto_Sans_CJK_SC',sans-serif]">
      <div className="flex h-6 shrink-0 items-start">
        <h2 className="flex-1 text-center font-['Liberation_Serif','Noto_Sans_CJK_SC',serif] text-[21px] leading-6 text-[#ffff00]">螺纹2410(rb2410)</h2>
        <button type="button" aria-label="弹出窗口" className="mt-px">
          <svg className="h-3.5 w-4" viewBox="0 0 16 14" fill="none" stroke="#6cb4ff" aria-hidden="true">
            <path d="M.5.500h15v13H.5z" />
            <path d="M6.500 5.500v-3h6v5h-3M7 3.500h5M3.500 6.500h6v5h-6zM4 7.500h5" />
          </svg>
        </button>
      </div>
      <div className="flex h-1.5 shrink-0 border-y border-[#c01810] px-px">
        <span className="w-[66%] bg-[#ff3c3c]" />
        <span className="flex-1 bg-[#00e600]" />
      </div>
      <Depth rows={ASKS} big={4} />
      <Depth rows={BIDS} big={0} />
      <div className="border-b border-[#c01810]">
        <table className="w-full table-fixed border-collapse text-sm">
          <colgroup>
            <col className="w-[40px]" />
            <col className="w-[73px]" />
            <col className="w-[46px]" />
            <col />
          </colgroup>
          <tbody>
            {STATS.map(([k, v, c, k2, v2, c2]) => (
              <tr key={k} className="h-5">
                <th scope="row" className="p-0 pl-1 text-left font-normal leading-5 text-[#e8e8e8]">{k}</th>
                <td className={`p-0 text-right font-bold leading-5 ${C[c]}`}>{v}</td>
                <th scope="row" className="p-0 pl-3.5 text-left font-normal leading-5 text-[#e8e8e8]">{k2}</th>
                <td className={`p-0 pr-1 text-right font-bold leading-5 ${C[c2]}`}>{v2}</td>
              </tr>
            ))}
          </tbody>
        </table>
      </div>
      <table className="w-full table-fixed border-collapse text-sm">
        <colgroup>
          <col className="w-[57px]" />
          <col className="w-[50px]" />
          <col className="w-[48px]" />
          <col className="w-[49px]" />
          <col />
        </colgroup>
        <thead>
          <tr className="h-[22px] whitespace-nowrap text-right text-[#808080]">
            <th className="p-0 pl-1 text-left font-normal leading-5">北京</th>
            <th className="p-0 font-normal leading-5">价格</th>
            <th className="p-0 font-normal leading-5">√大单</th>
            <th className="p-0 font-normal leading-5">仓差</th>
            <th className="p-0 font-normal leading-5">性质</th>
          </tr>
        </thead>
        <tbody>
          {TICKS.map(([time, price, vol, dir, diff, kind], i) => (
            <tr key={i} className="h-[22px] whitespace-nowrap text-right font-bold">
              <td className={time[0] === ":" ? "p-0 pr-[18px] text-xs font-normal leading-5 text-[#e8e8e8]" : "p-0 pl-1.5 text-left leading-5 text-[#f0f0f0]"}>{time}</td>
              <td className="p-0 leading-5 text-[#ff3c3c]">{price}</td>
              <td className={`p-0 leading-5 ${C[dir]}`}>{vol}</td>
              <td className="p-0 leading-5 text-[#ffff00]">{diff}</td>
              <td className={`p-0 font-normal leading-5 ${kind === "多平" || kind === "空开" ? C.g : C.r}`}>{kind}</td>
            </tr>
          ))}
        </tbody>
      </table>
      <div className="mt-auto flex h-4 shrink-0 text-xs leading-[15px] text-[#f0f0f0]">
        <button type="button" className="w-9 rounded-b border-b border-r border-[#c01810]">笔</button>
        <button type="button" className="w-9 border-t border-[#c01810]">权</button>
        <span className="flex-1 border-t border-[#c01810]">
          <span className="mt-0.5 block h-3 w-px bg-[#c01810]" />
        </span>
      </div>
    </section>
  );
}

/* ---------- status bar ---------- */

function StatusBar() {
  const down = "text-[#009000] font-bold";
  return (
    <footer className="flex h-3 shrink-0 items-start justify-between overflow-hidden bg-linear-to-b from-[#c6c6c6] to-[#a8a8a8] pt-1 font-['Liberation_Mono','Noto_Sans_CJK_SC',monospace] text-xs leading-4 text-[#404040]">
      <div className="-ml-[3px] flex whitespace-nowrap">
        <span className="w-7">沪</span>
        <span className={`w-[76px] ${down}`}>2848.73</span>
        <span className={`w-[43px] ${down}`}>-6.79</span>
        <span className="w-[70px]">2156.86亿</span>
        <span className="mr-2.5 h-4 w-px bg-[#808080]" />
        <span className="w-7">深</span>
        <span className={`w-[69px] ${down}`}>8103.76</span>
        <span className={`w-[51px] ${down}`}>-90.89</span>
        <span className="w-[70px]">2957.71亿</span>
        <span className="mr-2.5 h-4 w-px bg-[#808080]" />
        <span className="w-7">300</span>
        <span className={`w-[69px] ${down}`}>3305.33</span>
        <span className={`w-[51px] ${down}`}>-18.89</span>
        <span className="w-[70px]">1297.56亿</span>
        <span className="h-4 w-px bg-[#808080]" />
      </div>
      <div className="flex items-start font-['Liberation_Sans',sans-serif] leading-4">
        <span className="mr-2.5 text-sm font-bold leading-[18px]">
          p<span className="text-[#e02020]">o</span>bo
        </span>
        <svg className="mr-2.5 mt-px h-3 w-[22px]" viewBox="0 0 22 12" stroke="#404040" strokeWidth="2" fill="none" aria-hidden="true">
          <path d="M0 1h10L5 7zM5 0v12M15 12V6M20 12V2" />
        </svg>
        <span className="text-sm font-bold leading-[18px] text-[#606060]">16:08</span>
      </div>
    </footer>
  );
}

export default function App() {
  return (
    <div className={`relative flex h-screen min-h-[1022px] flex-col overflow-hidden bg-[#cfcfcf] ${UI}`}>
      <MenuBar />
      <Toolbar />
      <div className="absolute right-1 top-0 font-['Noto_Sans','Noto_Sans_CJK_SC',sans-serif] text-xl font-bold leading-7 text-[#ff6a00] [text-shadow:1px_1px_0_#fff,-1px_-1px_0_#fff]">
        5E天资5etz.com
      </div>
      <div className="flex min-h-0 flex-1">
        <SideTabs />
        <ChartColumn />
        <QuotePanel />
      </div>
      <StatusBar />
    </div>
  );
}
